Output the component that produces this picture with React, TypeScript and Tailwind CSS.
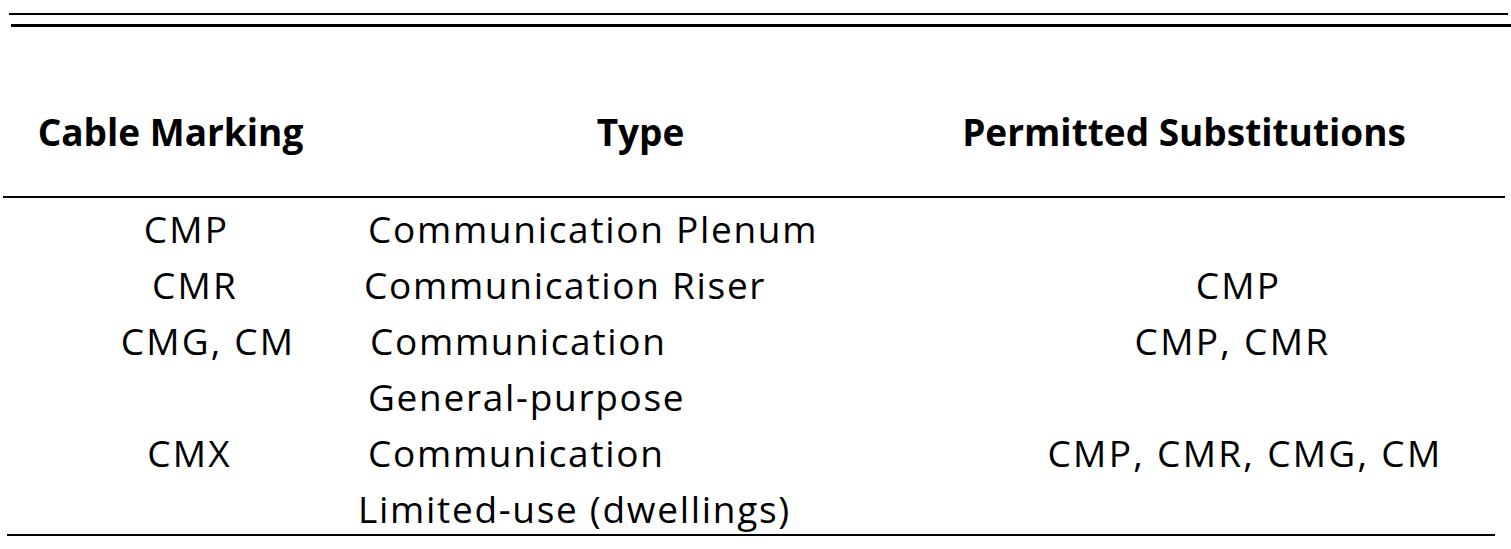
const rows = [
  { mark: 'CMP', markCls: 'pl-[33px]', type: 'Communication Plenum', typeCls: 'pl-[28px]', subs: '', subsCls: '' },
  { mark: 'CMR', markCls: 'pl-[50px]', type: 'Communication Riser', typeCls: 'pl-[24px]', subs: 'CMP', subsCls: 'pl-[36px]' },
  { mark: 'CMG, CM', markCls: 'pl-[76px]', type: 'Communication', typeCls: 'pl-[30px]', subs: 'CMP, CMR', subsCls: 'pl-[24px]' },
  { mark: '', markCls: '', type: 'General-purpose', typeCls: 'pl-[28px]', subs: '', subsCls: '' },
  { mark: 'CMX', markCls: 'pl-[39px]', type: 'Communication', typeCls: 'pl-[28px]', subs: 'CMP, CMR, CMG, CM', subsCls: 'pl-[49px]' },
  { mark: '', markCls: '', type: 'Limited-use (dwellings)', typeCls: 'pl-[18px]', subs: '', subsCls: '' },
];

export default function App() {
  return (
    <div className="w-[1511px] h-[549px] bg-white text-black overflow-hidden font-['Open_Sans','Lato',sans-serif] [font-variant-ligatures:none] pt-[13px]">
      <div className="h-[2px] w-[1499px] ml-[9px] bg-black" />
      <div className="h-[3px] w-[1500px] ml-[11px] mt-[9px] bg-black" />

      <div className="grid grid-cols-[340px_590px_581px] pt-[77px] text-[37px] leading-[56px] font-bold whitespace-nowrap">
        <div className="text-center pl-[1px]">Cable Marking</div>
        <div className="text-center pl-[11px]">Type</div>
        <div className="text-center pr-[73px]">Permitted Substitutions</div>
      </div>

      <div className="h-[2px] w-[1502px] ml-[3px] mt-[36px] bg-black" />

      <div className="mt-[3px] text-[37px] leading-[56px] whitespace-nowrap">
        {rows.map((r, i) => (
          <div key={i} className="grid grid-cols-[340px_590px_581px] h-[56px]">
            <div className={`text-center tracking-[2.2px] ${r.markCls}`}>{r.mark}</div>
            <div className={`tracking-[1.7px] ${r.typeCls}`}>{r.type}</div>
            <div className={`text-center tracking-[2.3px] ${r.subsCls}`}>{r.subs}</div>
          </div>
        ))}
      </div>

      <div className="h-[2px] w-[1488px] ml-[7px] -mt-[3px] bg-black" />
    </div>
  );
}
